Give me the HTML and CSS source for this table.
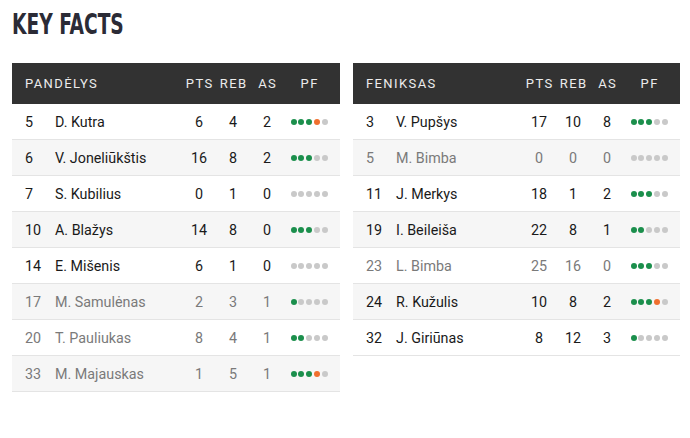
FILE: index.html
```html
<!DOCTYPE html>
<html lang="lt">
<head>
<meta charset="utf-8">
<title>Key Facts</title>
<link rel="stylesheet" href="styles.css">
</head>
<body>
<div class="page">
  <h1 class="title"><span class="title-text">KEY FACTS</span></h1>
  <div class="tables">
    <div class="team team-left">
      <div class="row head">
        <span class="tname">PANDĖLYS</span><span class="c">PTS</span><span class="c">REB</span><span class="c">AS</span><span class="c pf-h">PF</span>
      </div>
      <div class="row"><span>5</span><span>D. Kutra</span><span class="c">6</span><span class="c">4</span><span class="c">2</span><span class="dots"><i class="g"></i><i class="g"></i><i class="g"></i><i class="o"></i><i></i></span></div>
      <div class="row alt"><span>6</span><span>V. Joneliūkštis</span><span class="c">16</span><span class="c">8</span><span class="c">2</span><span class="dots"><i class="g"></i><i class="g"></i><i class="g"></i><i></i><i></i></span></div>
      <div class="row"><span>7</span><span>S. Kubilius</span><span class="c">0</span><span class="c">1</span><span class="c">0</span><span class="dots"><i></i><i></i><i></i><i></i><i></i></span></div>
      <div class="row alt"><span>10</span><span>A. Blažys</span><span class="c">14</span><span class="c">8</span><span class="c">0</span><span class="dots"><i class="g"></i><i class="g"></i><i class="g"></i><i></i><i></i></span></div>
      <div class="row"><span>14</span><span>E. Mišenis</span><span class="c">6</span><span class="c">1</span><span class="c">0</span><span class="dots"><i></i><i></i><i></i><i></i><i></i></span></div>
      <div class="row alt dim"><span>17</span><span>M. Samulėnas</span><span class="c">2</span><span class="c">3</span><span class="c">1</span><span class="dots"><i class="g"></i><i></i><i></i><i></i><i></i></span></div>
      <div class="row dim"><span>20</span><span>T. Pauliukas</span><span class="c">8</span><span class="c">4</span><span class="c">1</span><span class="dots"><i class="g"></i><i class="g"></i><i></i><i></i><i></i></span></div>
      <div class="row alt dim"><span>33</span><span>M. Majauskas</span><span class="c">1</span><span class="c">5</span><span class="c">1</span><span class="dots"><i class="g"></i><i class="g"></i><i class="g"></i><i class="o"></i><i></i></span></div>
    </div>
    <div class="team team-right">
      <div class="row head">
        <span class="tname">FENIKSAS</span><span class="c">PTS</span><span class="c">REB</span><span class="c">AS</span><span class="c pf-h">PF</span>
      </div>
      <div class="row"><span>3</span><span>V. Pupšys</span><span class="c">17</span><span class="c">10</span><span class="c">8</span><span class="dots"><i class="g"></i><i class="g"></i><i class="g"></i><i></i><i></i></span></div>
      <div class="row alt dim"><span>5</span><span>M. Bimba</span><span class="c">0</span><span class="c">0</span><span class="c">0</span><span class="dots"><i></i><i></i><i></i><i></i><i></i></span></div>
      <div class="row"><span>11</span><span>J. Merkys</span><span class="c">18</span><span class="c">1</span><span class="c">2</span><span class="dots"><i class="g"></i><i class="g"></i><i class="g"></i><i></i><i></i></span></div>
      <div class="row alt"><span>19</span><span>I. Beileiša</span><span class="c">22</span><span class="c">8</span><span class="c">1</span><span class="dots"><i class="g"></i><i class="g"></i><i></i><i></i><i></i></span></div>
      <div class="row dim"><span>23</span><span>L. Bimba</span><span class="c">25</span><span class="c">16</span><span class="c">0</span><span class="dots"><i class="g"></i><i class="g"></i><i class="g"></i><i></i><i></i></span></div>
      <div class="row alt"><span>24</span><span>R. Kužulis</span><span class="c">10</span><span class="c">8</span><span class="c">2</span><span class="dots"><i class="g"></i><i class="g"></i><i class="g"></i><i class="o"></i><i></i></span></div>
      <div class="row"><span>32</span><span>J. Giriūnas</span><span class="c">8</span><span class="c">12</span><span class="c">3</span><span class="dots"><i class="g"></i><i></i><i></i><i></i><i></i></span></div>
    </div>
  </div>
</div>
</body>
</html>
```

FILE: styles.css
```css
html, body {
  margin: 0;
  padding: 0;
  background: #ffffff;
}
.page {
  padding: 9px 10px 0 12px;
  font-family: Roboto, "Liberation Sans", Arial, sans-serif;
  color: #1a1a1a;
}
.title {
  margin: 0;
  font-family: "DejaVu Sans Condensed", "DejaVu Sans", sans-serif;
  font-weight: 700;
  font-size: 28px;
  line-height: 32px;
  color: #2b2b36;
}
.title-text {
  display: inline-block;
  transform: scaleX(0.74);
  transform-origin: left center;
}
.tables {
  margin-top: 22px;
  display: grid;
  grid-template-columns: 328px 327px;
  column-gap: 13px;
  align-items: start;
}
.row {
  display: grid;
  grid-template-columns: 30px 1fr 34px 34px 34px 50px;
  align-items: center;
  height: 35px;
  padding: 0 6px 0 13px;
  border-bottom: 1px solid #e4e4e4;
  font-size: 14.3px;
  background: #ffffff;
}
.row.alt {
  background: #f6f6f6;
}
.row.dim {
  color: #7a7a7a;
}
.row.head {
  height: 41px;
  background: #323232;
  color: #ececec;
  font-size: 13px;
  font-weight: 400;
  letter-spacing: 1.4px;
  border-bottom: none;
}
.tname {
  grid-column: 1 / 3;
}
.c {
  text-align: center;
}
.head .c {
  padding-left: 1.4px;
}
.dots {
  display: flex;
  justify-content: center;
  gap: 1.75px;
}
.dots i {
  display: block;
  width: 6px;
  height: 6px;
  border-radius: 50%;
  background: #c9c9c9;
}
.dots i.g {
  background: #1b8f4c;
}
.dots i.o {
  background: #f0702f;
}
```
